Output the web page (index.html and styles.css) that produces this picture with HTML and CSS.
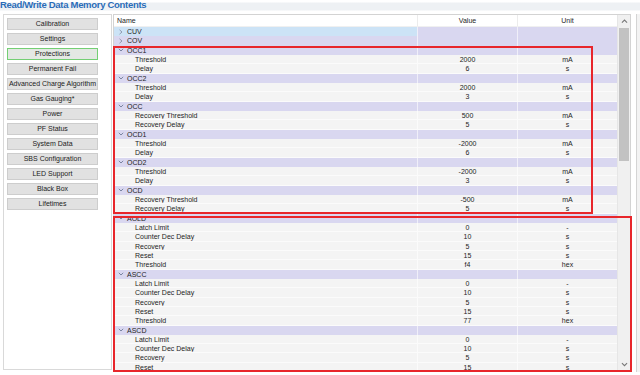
FILE: index.html
```html
<!DOCTYPE html>
<html lang="en">
<head>
  <meta charset="UTF-8" />
  <title>Read/Write Data Memory Contents</title>
  <link rel="stylesheet" href="styles.css">
</head>
<body>

<div class="titlebar">Read/Write Data Memory Contents</div>

<div class="main">
  <div class="sidebar">
    <button class="btn">Calibration</button>
    <button class="btn">Settings</button>
    <button class="btn active">Protections</button>
    <button class="btn">Permanent Fail</button>
    <button class="btn">Advanced Charge Algorithm</button>
    <button class="btn">Gas Gauging*</button>
    <button class="btn">Power</button>
    <button class="btn">PF Status</button>
    <button class="btn">System Data</button>
    <button class="btn">SBS Configuration</button>
    <button class="btn">LED Support</button>
    <button class="btn">Black Box</button>
    <button class="btn">Lifetimes</button>
  </div>

  <div class="table">
    <div class="grid">
      <div class="head">
        <div class="cell name">Name</div>
        <div class="cell">Value</div>
        <div class="cell">Unit</div>
      </div>

      <div class="row group closed selected">
        <div class="cell name"><svg class="chev" viewBox="0 0 6 6"><path d="M1.5 0.8 L4 3 L1.5 5.2"/></svg>CUV</div><div class="cell"></div><div class="cell"></div>
      </div>
      <div class="row group closed">
        <div class="cell name"><svg class="chev" viewBox="0 0 6 6"><path d="M1.5 0.8 L4 3 L1.5 5.2"/></svg>COV</div><div class="cell"></div><div class="cell"></div>
      </div>

      <div class="row group">
        <div class="cell name"><svg class="chev" viewBox="0 0 6 6"><path d="M0.8 1.8 L3 4 L5.2 1.8"/></svg>OCC1</div><div class="cell"></div><div class="cell"></div>
      </div>
      <div class="row item"><div class="cell name">Threshold</div><div class="cell">2000</div><div class="cell">mA</div></div>
      <div class="row item"><div class="cell name">Delay</div><div class="cell">6</div><div class="cell">s</div></div>

      <div class="row group">
        <div class="cell name"><svg class="chev" viewBox="0 0 6 6"><path d="M0.8 1.8 L3 4 L5.2 1.8"/></svg>OCC2</div><div class="cell"></div><div class="cell"></div>
      </div>
      <div class="row item"><div class="cell name">Threshold</div><div class="cell">2000</div><div class="cell">mA</div></div>
      <div class="row item"><div class="cell name">Delay</div><div class="cell">3</div><div class="cell">s</div></div>

      <div class="row group">
        <div class="cell name"><svg class="chev" viewBox="0 0 6 6"><path d="M0.8 1.8 L3 4 L5.2 1.8"/></svg>OCC</div><div class="cell"></div><div class="cell"></div>
      </div>
      <div class="row item"><div class="cell name">Recovery Threshold</div><div class="cell">500</div><div class="cell">mA</div></div>
      <div class="row item"><div class="cell name">Recovery Delay</div><div class="cell">5</div><div class="cell">s</div></div>

      <div class="row group">
        <div class="cell name"><svg class="chev" viewBox="0 0 6 6"><path d="M0.8 1.8 L3 4 L5.2 1.8"/></svg>OCD1</div><div class="cell"></div><div class="cell"></div>
      </div>
      <div class="row item"><div class="cell name">Threshold</div><div class="cell">-2000</div><div class="cell">mA</div></div>
      <div class="row item"><div class="cell name">Delay</div><div class="cell">6</div><div class="cell">s</div></div>

      <div class="row group">
        <div class="cell name"><svg class="chev" viewBox="0 0 6 6"><path d="M0.8 1.8 L3 4 L5.2 1.8"/></svg>OCD2</div><div class="cell"></div><div class="cell"></div>
      </div>
      <div class="row item"><div class="cell name">Threshold</div><div class="cell">-2000</div><div class="cell">mA</div></div>
      <div class="row item"><div class="cell name">Delay</div><div class="cell">3</div><div class="cell">s</div></div>

      <div class="row group">
        <div class="cell name"><svg class="chev" viewBox="0 0 6 6"><path d="M0.8 1.8 L3 4 L5.2 1.8"/></svg>OCD</div><div class="cell"></div><div class="cell"></div>
      </div>
      <div class="row item"><div class="cell name">Recovery Threshold</div><div class="cell">-500</div><div class="cell">mA</div></div>
      <div class="row item"><div class="cell name">Recovery Delay</div><div class="cell">5</div><div class="cell">s</div></div>

      <div class="row group">
        <div class="cell name"><svg class="chev" viewBox="0 0 6 6"><path d="M0.8 1.8 L3 4 L5.2 1.8"/></svg>AOLD</div><div class="cell"></div><div class="cell"></div>
      </div>
      <div class="row item"><div class="cell name">Latch Limit</div><div class="cell">0</div><div class="cell">-</div></div>
      <div class="row item"><div class="cell name">Counter Dec Delay</div><div class="cell">10</div><div class="cell">s</div></div>
      <div class="row item"><div class="cell name">Recovery</div><div class="cell">5</div><div class="cell">s</div></div>
      <div class="row item"><div class="cell name">Reset</div><div class="cell">15</div><div class="cell">s</div></div>
      <div class="row item"><div class="cell name">Threshold</div><div class="cell">f4</div><div class="cell">hex</div></div>

      <div class="row group">
        <div class="cell name"><svg class="chev" viewBox="0 0 6 6"><path d="M0.8 1.8 L3 4 L5.2 1.8"/></svg>ASCC</div><div class="cell"></div><div class="cell"></div>
      </div>
      <div class="row item"><div class="cell name">Latch Limit</div><div class="cell">0</div><div class="cell">-</div></div>
      <div class="row item"><div class="cell name">Counter Dec Delay</div><div class="cell">10</div><div class="cell">s</div></div>
      <div class="row item"><div class="cell name">Recovery</div><div class="cell">5</div><div class="cell">s</div></div>
      <div class="row item"><div class="cell name">Reset</div><div class="cell">15</div><div class="cell">s</div></div>
      <div class="row item"><div class="cell name">Threshold</div><div class="cell">77</div><div class="cell">hex</div></div>

      <div class="row group">
        <div class="cell name"><svg class="chev" viewBox="0 0 6 6"><path d="M0.8 1.8 L3 4 L5.2 1.8"/></svg>ASCD</div><div class="cell"></div><div class="cell"></div>
      </div>
      <div class="row item"><div class="cell name">Latch Limit</div><div class="cell">0</div><div class="cell">-</div></div>
      <div class="row item"><div class="cell name">Counter Dec Delay</div><div class="cell">10</div><div class="cell">s</div></div>
      <div class="row item"><div class="cell name">Recovery</div><div class="cell">5</div><div class="cell">s</div></div>
      <div class="row item"><div class="cell name">Reset</div><div class="cell">15</div><div class="cell">s</div></div>
    </div>

    <div class="scrollbar">
      <svg class="arrow" viewBox="0 0 6 6"><path d="M0.8 4 L3 1.8 L5.2 4"/></svg>
      <div class="track"><div class="thumb"></div></div>
      <svg class="arrow" viewBox="0 0 6 6"><path d="M0.8 1.8 L3 4 L5.2 1.8"/></svg>
    </div>
  </div>

  <div class="edge"></div>
</div>

<!-- annotation boxes drawn over the table -->
<div class="mark mark-occ"></div>
<div class="mark mark-asc"></div>

</body>
</html>
```

FILE: styles.css
```css
* {
  box-sizing: border-box;
}

body {
  margin: 0;
  width: 640px;
  height: 375px;
  overflow: hidden;
  position: relative;
  background: #fff;
  font-family: "Liberation Sans", Arial, sans-serif;
  font-size: 7px;
  color: #1e1e1e;
}

.titlebar {
  height: 14px;
  font-size: 9.5px;
  font-weight: bold;
  letter-spacing: -0.3px;
  line-height: 9px;
  color: #2a6cb8;
  background: linear-gradient(#fff 0, #fff 2px, #eef1f4 3px, #eef1f4 10px, #fff 11px);
}

.main {
  display: flex;
  height: 358px;
}

.sidebar {
  width: 109px;
  height: 356px;
  margin-left: 3px;
  padding: 3px 0 0 3px;
  border: 1px solid #d9d9d9;
  display: flex;
  flex-direction: column;
  gap: 3px;
}

.btn {
  width: 91px;
  height: 12px;
  padding: 0;
  font-family: inherit;
  font-size: 7px;
  line-height: 10px;
  color: #222;
  background: #e1e1e1;
  border: 1px solid #cdcdcd;
  border-radius: 0;
}

.btn.active {
  border-color: #74cf74;
  background: #e4e8e4;
}

.table {
  width: 518px;
  height: 358px;
  margin-left: 1px;
  border: 1px solid #d3d3d3;
  display: flex;
  overflow: hidden;
}

.grid {
  width: 503px;
  overflow: hidden;
}

.head,
.row {
  display: grid;
  grid-template-columns: 303px 100px 100px;
}

.head {
  height: 12px;
  line-height: 11px;
  background: #fff;
  border-bottom: 1px solid #f0f0f0;
}

.head .cell + .cell {
  border-left: 1px solid #ececec;
}

.head .name {
  padding-left: 3px;
  text-align: left;
}

.cell {
  text-align: center;
  white-space: nowrap;
  overflow: hidden;
}

.row {
  height: 9.333px;
  line-height: 9px;
}

.row .cell + .cell {
  border-left: 1px solid rgba(255, 255, 255, 0.6);
}

.group {
  background: #d9d7f0;
}

.group .name {
  text-align: left;
  padding-left: 4px;
  display: flex;
  align-items: center;
  gap: 3px;
}

.group.selected .name {
  background: #cce3f6;
}

.chev {
  width: 6px;
  height: 6px;
  flex: none;
}

.chev path,
.arrow path {
  fill: none;
  stroke: #6f7c98;
  stroke-width: 0.9;
}

.closed .chev path {
  stroke: #8a93a8;
}

.item {
  background: #f4f4f4;
  border-bottom: 1px solid #fbfbfb;
}

.item .name {
  text-align: left;
  padding-left: 21px;
}

.scrollbar {
  width: 13px;
  display: flex;
  flex-direction: column;
  align-items: center;
  background: #f0f0f0;
  border-left: 1px solid #e6e6e6;
}

.arrow {
  width: 7px;
  height: 7px;
  margin: 3px 0;
  flex: none;
}

.arrow path {
  stroke: #777;
}

.track {
  flex: 1;
  width: 100%;
  padding: 0 1px;
}

.thumb {
  height: 133px;
  background: #c2c2c2;
}

.edge {
  width: 9px;
  background: linear-gradient(to right, #fff 5px, #d4d4d4 5px, #d4d4d4 6px, #f3f3f3 6px);
}

.mark {
  position: absolute;
  border: 2px solid #e8262b;
}

.mark-occ {
  left: 113px;
  top: 46px;
  width: 480px;
  height: 168px;
}

.mark-asc {
  left: 113px;
  top: 216px;
  width: 519px;
  height: 156px;
}
```
